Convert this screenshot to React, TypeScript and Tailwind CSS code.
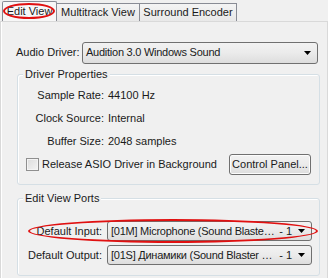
import React from 'react';

const font = { fontFamily: '"Liberation Sans", "Noto Sans CJK SC", sans-serif' };

const Arrow = () => (
  <svg width="7" height="4" viewBox="0 0 7 4" className="shrink-0">
    <path d="M0 0H7L3.5 4Z" fill="#000" />
  </svg>
);

const Combo = ({ text, w, h, suffix }: { text: string; w: string; h: string; suffix?: string }) => (
  <div
    className={`${w} ${h} shrink-0 flex items-center rounded-[3px] border border-[#707070] bg-gradient-to-b from-[#f2f2f2] via-[#ebebeb] to-[#dddddd] pl-[3px] pr-[6px] text-[11px] text-[#1a1a1a]`}
  >
    <span className="flex-1 min-w-0 whitespace-nowrap tracking-[-0.25px]">{text}</span>
    {suffix && <span className="shrink-0 whitespace-nowrap ml-[4px] mr-[6px]">{suffix}</span>}
    <Arrow />
  </div>
);

const Group = ({ title, className, children }: { title: string; className: string; children: React.ReactNode }) => (
  <div className={`relative shrink-0 rounded-[3px] border border-[#d5dfe5] shadow-[inset_1px_1px_0_#fff] ${className}`}>
    <span className="absolute left-[5px] top-[-8px] bg-[#f0f0f0] px-[2px] text-[11px] leading-[14px] text-[#1a1a1a]">
      {title}
    </span>
    {children}
  </div>
);

export default function App() {
  return (
    <div className="w-[328px] h-[278px] bg-[#f0f0f0] overflow-hidden text-[#1a1a1a] text-[11px]" style={font}>
      {/* Tabs */}
      <div className="h-[22px] flex items-end pl-[2px] border-b border-[#d9d9d9]">
        <div className="relative h-[20px] w-[55px] shrink-0 flex items-center justify-center bg-[#f7f7f7] border-t border-l border-r border-[#898c95] rounded-t-[2px] whitespace-nowrap">
          Edit View
          <div className="absolute left-[0px] top-[1px] w-[52px] h-[16px] rounded-[50%] border-2 border-[#e01010]" />
        </div>
        <div className="h-[18px] w-[83px] shrink-0 flex items-center justify-center border-t border-r border-[#898c95] bg-gradient-to-b from-[#f4f4f4] to-[#e8e8e8] whitespace-nowrap">
          Multitrack View
        </div>
        <div className="h-[18px] w-[97px] shrink-0 flex items-center justify-center border-t border-r border-[#898c95] bg-gradient-to-b from-[#f4f4f4] to-[#e8e8e8] whitespace-nowrap">
          Surround Encoder
        </div>
      </div>

      {/* Panel */}
      <div className="h-[256px] border-l border-r border-[#d9d9d9] shadow-[inset_1px_0_0_#fff] flex flex-col px-[14px]">
        <div className="flex items-center mt-[20px] h-[21px]">
          <span className="w-[67px] shrink-0 whitespace-nowrap pl-[1px]">Audio Driver:</span>
          <Combo w="w-[236px]" h="h-[22px]" text="Audition 3.0 Windows Sound" />
        </div>

        <Group title="Driver Properties" className="mt-[11px] ml-[2px] w-[303px] h-[111px]">
          <div className="flex flex-col pt-[9px]">
            {[
              ['Sample Rate:', '44100 Hz'],
              ['Clock Source:', 'Internal'],
              ['Buffer Size:', '2048 samples'],
            ].map(([k, v]) => (
              <div key={k} className="flex h-[23px] items-center">
                <span className="w-[86px] shrink-0 text-right whitespace-nowrap">{k}</span>
                <span className="ml-[4px] whitespace-nowrap">{v}</span>
              </div>
            ))}
            <div className="flex items-center mt-[1px]">
              <div className="ml-[8px] shrink-0 w-[13px] h-[13px] border border-[#8f8f8f] bg-gradient-to-br from-[#dcdcdc] to-[#f4f4f4] shadow-[inset_0_0_0_1px_#f4f4f4]" />
              <span className="ml-[3px] shrink-0 whitespace-nowrap w-[187px]">Release ASIO Driver in Background</span>
              <div className="h-[21px] w-[82px] shrink-0 flex items-center justify-center rounded-[3px] border border-[#707070] bg-gradient-to-b from-[#f2f2f2] via-[#ebebeb] to-[#dddddd] shadow-[inset_0_0_0_1px_#fcfcfc] whitespace-nowrap">
                Control Panel...
              </div>
            </div>
          </div>
        </Group>

        <Group title="Edit View Ports" className="mt-[13px] ml-[2px] w-[303px] h-[78px]">
          <div className="relative flex flex-col pt-[22px] gap-[4px]">
            <div className="flex items-center">
              <span className="w-[84px] shrink-0 text-right whitespace-nowrap">Default Input:</span>
              <div className="ml-[5px]">
                <Combo w="w-[205px]" h="h-[20px]" text="[01M] Microphone (Sound Blaste…" suffix="- 1" />
              </div>
            </div>
            <div className="flex items-center">
              <span className="w-[84px] shrink-0 text-right whitespace-nowrap">Default Output:</span>
              <div className="ml-[5px]">
                <Combo w="w-[205px]" h="h-[20px]" text="[01S] Динамики (Sound Blaster …" suffix="- 1" />
              </div>
            </div>
            <div className="absolute left-[10px] top-[20px] w-[290px] h-[24px] rounded-[50%] border-2 border-[#e01010]" />
          </div>
        </Group>
      </div>
    </div>
  );
}
